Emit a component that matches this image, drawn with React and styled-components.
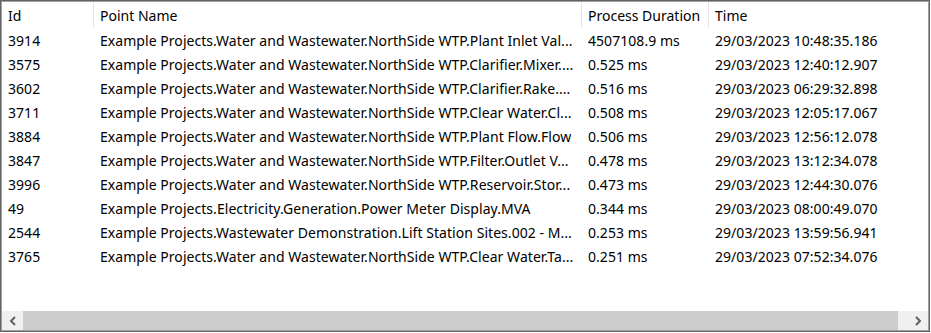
import React from 'react';
import styled, { createGlobalStyle } from 'styled-components';

const GlobalStyle = createGlobalStyle`
  html, body {
    margin: 0;
    padding: 0;
    background: #fff;
  }
  body {
    font-family: "Noto Sans", "Open Sans", sans-serif;
    font-size: 14px;
    color: #000;
  }
`;

const Frame = styled.div`
  box-sizing: border-box;
  width: 930px;
  height: 332px;
  border: 1px solid #646464;
  box-shadow: inset 0 0 0 1px #a0a0a0;
  padding: 1px;
  display: flex;
  flex-direction: column;
`;

const Body = styled.div`
  flex: 1;
  overflow: hidden;
`;

const Grid = styled.div`
  display: grid;
  grid-template-columns: 92px 488px 127px 1fr;
`;

const HeadCell = styled.div`
  height: 26px;
  line-height: 28px;
  padding-left: 6px;
  white-space: nowrap;
  overflow: hidden;
  border-right: ${({ last }) => (last ? 'none' : '1px solid #e5e5e5')};
  box-sizing: border-box;
`;

const Cell = styled.div`
  height: 24px;
  line-height: 26px;
  padding-left: 6px;
  white-space: nowrap;
  overflow: hidden;
  letter-spacing: 0.05px;
`;

const ScrollBar = styled.div`
  height: 19px;
  display: flex;
  background: #f0f0f0;
`;

const ArrowBtn = styled.div`
  width: 21px;
  display: flex;
  align-items: center;
  justify-content: center;
  svg {
    display: block;
  }
`;

const Track = styled.div`
  flex: 1;
  display: flex;
  padding-right: 9px;
`;

const Thumb = styled.div`
  flex: 1;
  background: #cdcdcd;
`;

const Chevron = ({ dir }) => (
  <svg width="8" height="10" viewBox="0 0 8 10">
    <path
      d={dir === 'left' ? 'M6 1 L2 5 L6 9' : 'M2 1 L6 5 L2 9'}
      fill="none"
      stroke="#606060"
      strokeWidth="2"
    />
  </svg>
);

const rows = [
  ['3914', 'Example Projects.Water and Wastewater.NorthSide WTP.Plant Inlet Val...', '4507108.9 ms', '29/03/2023 10:48:35.186'],
  ['3575', 'Example Projects.Water and Wastewater.NorthSide WTP.Clarifier.Mixer....', '0.525 ms', '29/03/2023 12:40:12.907'],
  ['3602', 'Example Projects.Water and Wastewater.NorthSide WTP.Clarifier.Rake....', '0.516 ms', '29/03/2023 06:29:32.898'],
  ['3711', 'Example Projects.Water and Wastewater.NorthSide WTP.Clear Water.Cl...', '0.508 ms', '29/03/2023 12:05:17.067'],
  ['3884', 'Example Projects.Water and Wastewater.NorthSide WTP.Plant Flow.Flow', '0.506 ms', '29/03/2023 12:56:12.078'],
  ['3847', 'Example Projects.Water and Wastewater.NorthSide WTP.Filter.Outlet V...', '0.478 ms', '29/03/2023 13:12:34.078'],
  ['3996', 'Example Projects.Water and Wastewater.NorthSide WTP.Reservoir.Stor...', '0.473 ms', '29/03/2023 12:44:30.076'],
  ['49', 'Example Projects.Electricity.Generation.Power Meter Display.MVA', '0.344 ms', '29/03/2023 08:00:49.070'],
  ['2544', 'Example Projects.Wastewater Demonstration.Lift Station Sites.002 - M...', '0.253 ms', '29/03/2023 13:59:56.941'],
  ['3765', 'Example Projects.Water and Wastewater.NorthSide WTP.Clear Water.Ta...', '0.251 ms', '29/03/2023 07:52:34.076'],
];

export default function App() {
  return (
    <>
      <GlobalStyle />
      <Frame>
        <Body>
          <Grid>
            <HeadCell>Id</HeadCell>
            <HeadCell>Point Name</HeadCell>
            <HeadCell>Process Duration</HeadCell>
            <HeadCell last>Time</HeadCell>
            {rows.map((r) =>
              r.map((v, i) => <Cell key={r[0] + '-' + i}>{v}</Cell>)
            )}
          </Grid>
        </Body>
        <ScrollBar>
          <ArrowBtn>
            <Chevron dir="left" />
          </ArrowBtn>
          <Track>
            <Thumb />
          </Track>
          <ArrowBtn>
            <Chevron dir="right" />
          </ArrowBtn>
        </ScrollBar>
      </Frame>
    </>
  );
}
